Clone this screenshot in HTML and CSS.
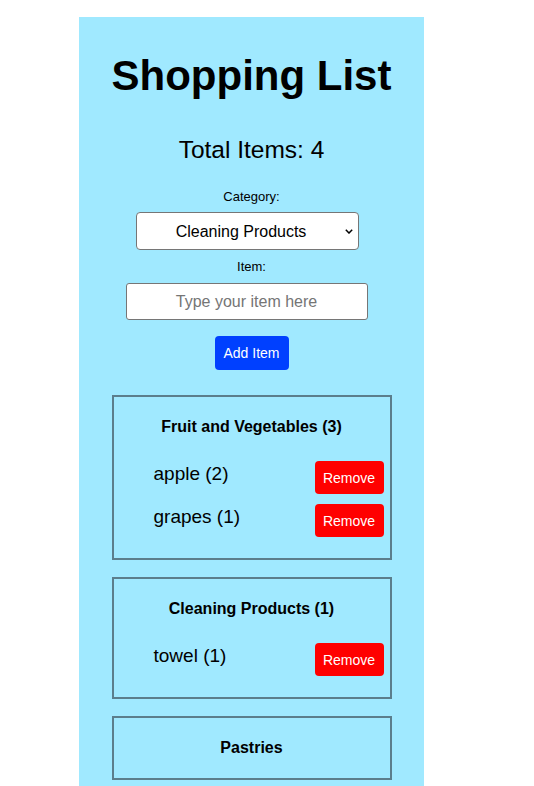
FILE: index.html
```html
<!DOCTYPE html>
<html lang="en">
<head>
<meta charset="utf-8">
<title>Shopping List</title>
<link rel="stylesheet" href="styles.css">
</head>
<body>
<div class="app">
  <h1 class="title">Shopping List</h1>
  <h2 class="total">Total Items: 4</h2>
  <label class="label label-cat" for="cat">Category:</label>
  <select id="cat" class="select">
    <option>Fruit and Vegetables</option>
    <option selected>Cleaning Products</option>
    <option>Pastries</option>
  </select>
  <label class="label label-item" for="item">Item:</label>
  <input id="item" class="input" type="text" placeholder="Type your item here">
  <button class="add-btn">Add Item</button>

  <div class="cards">
    <div class="card">
      <h3 class="card-title">Fruit and Vegetables (3)</h3>
      <ul class="items">
        <li class="item"><span class="item-name">apple (2)</span><button class="remove-btn">Remove</button></li>
        <li class="item"><span class="item-name">grapes (1)</span><button class="remove-btn">Remove</button></li>
      </ul>
    </div>
    <div class="card">
      <h3 class="card-title">Cleaning Products (1)</h3>
      <ul class="items">
        <li class="item"><span class="item-name">towel (1)</span><button class="remove-btn">Remove</button></li>
      </ul>
    </div>
    <div class="card">
      <h3 class="card-title">Pastries</h3>
    </div>
  </div>
</div>
</body>
</html>
```

FILE: styles.css
```css
* { box-sizing: border-box; }

html, body {
  margin: 0;
  padding: 0;
  background: #ffffff;
  font-family: "Liberation Sans", Arial, sans-serif;
  color: #000;
}

.app {
  width: 345px;
  margin: 17px 0 0 79px;
  padding: 35px 0 40px;
  background: #a0e9ff;
  display: flex;
  flex-direction: column;
  align-items: center;
}

.title {
  margin: 0;
  font-size: 42px;
  line-height: 48px;
  font-weight: 700;
}

.total {
  margin: 36px 0 0;
  font-size: 24.5px;
  line-height: 28px;
  font-weight: 400;
}

.label {
  font-size: 13px;
  line-height: 15px;
}

.label-cat { margin-top: 25px; }
.label-item { margin-top: 9px; }

.select {
  margin: 8px 9px 0 0;
  width: 223px;
  height: 38px;
  font-family: "Liberation Sans", Arial, sans-serif;
  font-size: 16px;
  text-align: center;
  color: #000;
  border: 1px solid #767676;
  border-radius: 4px;
  padding: 0 20px 0 8px;
  -webkit-appearance: none;
  appearance: none;
  background: #fff url("data:image/svg+xml,%3Csvg xmlns='http://www.w3.org/2000/svg' width='8' height='5' viewBox='0 0 8 5'%3E%3Cpath d='M0.8 0.8 L4 4 L7.2 0.8' fill='none' stroke='%23000' stroke-width='1.5'/%3E%3C/svg%3E") no-repeat right 5px center;
}

.input {
  margin: 9px 10px 0 0;
  width: 242px;
  height: 37px;
  font-family: "Liberation Sans", Arial, sans-serif;
  font-size: 16px;
  text-align: center;
  background: #fff;
  border: 1px solid #767676;
  border-radius: 3px;
  padding: 0 8px;
}

.input::placeholder { color: #757575; }

.add-btn {
  margin-top: 16px;
  width: 74px;
  height: 34px;
  padding: 0;
  background: #0040ff;
  color: #fff;
  border: none;
  border-radius: 4px;
  font-family: "Liberation Sans", Arial, sans-serif;
  font-size: 14px;
}

.cards {
  margin-top: 25px;
  display: flex;
  flex-direction: column;
  gap: 17px;
}

.card {
  width: 280px;
  border: 2px solid #5b7e8c;
  padding: 21px 0 21px;
}

.card-title {
  margin: 0;
  text-align: center;
  font-size: 16px;
  line-height: 18px;
  font-weight: 700;
}

.items {
  list-style: none;
  margin: 25px 0 0;
  padding: 0;
  display: flex;
  flex-direction: column;
  gap: 10px;
}

.item {
  display: flex;
  justify-content: space-between;
  align-items: flex-start;
  padding: 0 6px 0 40px;
}

.item-name {
  font-size: 19px;
  line-height: 26px;
}

.remove-btn {
  width: 69px;
  height: 33px;
  padding: 0;
  background: #ff0000;
  color: #fff;
  border: none;
  border-radius: 4px;
  font-family: "Liberation Sans", Arial, sans-serif;
  font-size: 14px;
}
```
